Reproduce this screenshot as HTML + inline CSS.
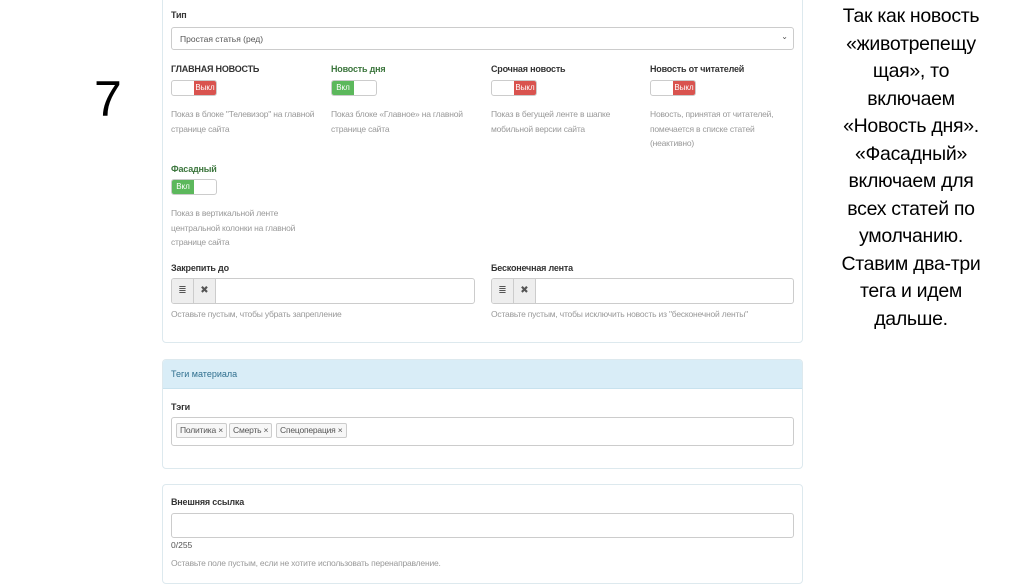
<!DOCTYPE html>
<html><head><meta charset="utf-8"><style>
*{box-sizing:border-box;margin:0;padding:0}
body{width:1024px;height:574px;background:#fff;position:relative;overflow:hidden;font-family:"Liberation Sans",sans-serif;color:#333}
.a{position:absolute;white-space:nowrap}
.panel{position:absolute;border:1px solid #dde9ee;border-radius:4px;background:#fff}
.lbl{position:absolute;font-size:9px;font-weight:bold;color:#333;letter-spacing:-0.2px}
.lbl.g{color:#3c763d}
.help{position:absolute;font-size:8.5px;color:#999;line-height:14.6px;letter-spacing:-0.2px}
.inp{position:absolute;border:1px solid #ccc;border-radius:3px;background:#fff}
.tg{position:absolute;width:46px;height:16px;border:1px solid #ccc;border-radius:3px;overflow:hidden;background:#fff}
.tg span{position:absolute;top:0;width:22px;height:14px;font-size:8px;color:#fff;text-align:center;line-height:14px}
.off span{right:0;background:#d9534f}
.on span{left:0;background:#5cb85c}
.btn{position:absolute;top:0;width:22px;height:24px;background:#eee;border-right:1px solid #ccc;font-size:10px;text-align:center;line-height:24px;color:#555}
.tag{position:absolute;top:5px;height:15px;border:1px solid #ccc;border-radius:2px;background:#f7f7f7;font-size:8.5px;line-height:13px;padding:0 3px;color:#555;letter-spacing:-0.2px}
.rt{position:absolute;left:818px;width:186px;top:3px;text-align:center;font-size:19.5px;line-height:27.5px;color:#000;font-family:"Liberation Sans","DejaVu Sans",sans-serif;letter-spacing:-0.3px}
</style></head><body>
<div class="a" style="left:94px;top:70px;font-size:50px;color:#000">7</div>

<div class="panel" style="left:162px;top:-6px;width:641px;height:349px"></div>
<div class="lbl" style="left:171px;top:10px">Тип</div>
<div class="inp" style="left:171px;top:27px;width:623px;height:23px;font-size:8.5px;color:#555;padding:6px 8px">Простая статья (ред)<span style="position:absolute;right:5px;top:4px;font-size:8px">⌄</span></div>

<div class="lbl" style="left:171px;top:64px">ГЛАВНАЯ НОВОСТЬ</div>
<div class="lbl g" style="left:331px;top:64px">Новость дня</div>
<div class="lbl" style="left:491px;top:64px">Срочная новость</div>
<div class="lbl" style="left:650px;top:64px">Новость от читателей</div>
<div class="tg off" style="left:171px;top:80px"><span>Выкл</span></div>
<div class="tg on" style="left:331px;top:80px"><span>Вкл</span></div>
<div class="tg off" style="left:491px;top:80px"><span>Выкл</span></div>
<div class="tg off" style="left:650px;top:80px"><span>Выкл</span></div>
<div class="help" style="left:171px;top:107px">Показ в блоке "Телевизор" на главной<br>странице сайта</div>
<div class="help" style="left:331px;top:107px">Показ блоке «Главное» на главной<br>странице сайта</div>
<div class="help" style="left:491px;top:107px">Показ в бегущей ленте в шапке<br>мобильной версии сайта</div>
<div class="help" style="left:650px;top:107px">Новость, принятая от читателей,<br>помечается в списке статей<br>(неактивно)</div>

<div class="lbl g" style="left:171px;top:164px">Фасадный</div>
<div class="tg on" style="left:171px;top:179px"><span>Вкл</span></div>
<div class="help" style="left:171px;top:206px">Показ в вертикальной ленте<br>центральной колонки на главной<br>странице сайта</div>

<div class="lbl" style="left:171px;top:263px">Закрепить до</div>
<div class="lbl" style="left:491px;top:263px">Бесконечная лента</div>
<div class="inp" style="left:171px;top:278px;width:304px;height:26px;overflow:hidden"><div class="btn" style="left:0">≣</div><div class="btn" style="left:22px">✖</div></div>
<div class="inp" style="left:491px;top:278px;width:303px;height:26px;overflow:hidden"><div class="btn" style="left:0">≣</div><div class="btn" style="left:22px">✖</div></div>
<div class="help" style="left:171px;top:307px">Оставьте пустым, чтобы убрать запрепление</div>
<div class="help" style="left:491px;top:307px">Оставьте пустым, чтобы исключить новость из "бесконечной ленты"</div>

<div class="panel" style="left:162px;top:359px;width:641px;height:110px;overflow:hidden"><div style="height:29px;background:#d9edf7;border-bottom:1px solid #c8e2ee;color:#31708f;font-size:9px;padding:9px 8px">Теги материала</div></div>
<div class="lbl" style="left:171px;top:402px">Тэги</div>
<div class="inp" style="left:171px;top:417px;width:623px;height:29px">
<div class="tag" style="left:4px">Политика ×</div><div class="tag" style="left:57px">Смерть ×</div><div class="tag" style="left:104px">Спецоперация ×</div></div>

<div class="panel" style="left:162px;top:484px;width:641px;height:100px"></div>
<div class="lbl" style="left:171px;top:497px">Внешняя ссылка</div>
<div class="inp" style="left:171px;top:513px;width:623px;height:25px"></div>
<div class="a" style="left:171px;top:540px;font-size:8.5px;color:#555">0/255</div>
<div class="help" style="left:171px;top:556px">Оставьте поле пустым, если не хотите использовать перенаправление.</div>

<div class="rt">Так как новость<br>«животрепещу<br>щая», то<br>включаем<br>«Новость дня».<br>«Фасадный»<br>включаем для<br>всех статей по<br>умолчанию.<br>Ставим два-три<br>тега и идем<br>дальше.</div>
</body></html>
